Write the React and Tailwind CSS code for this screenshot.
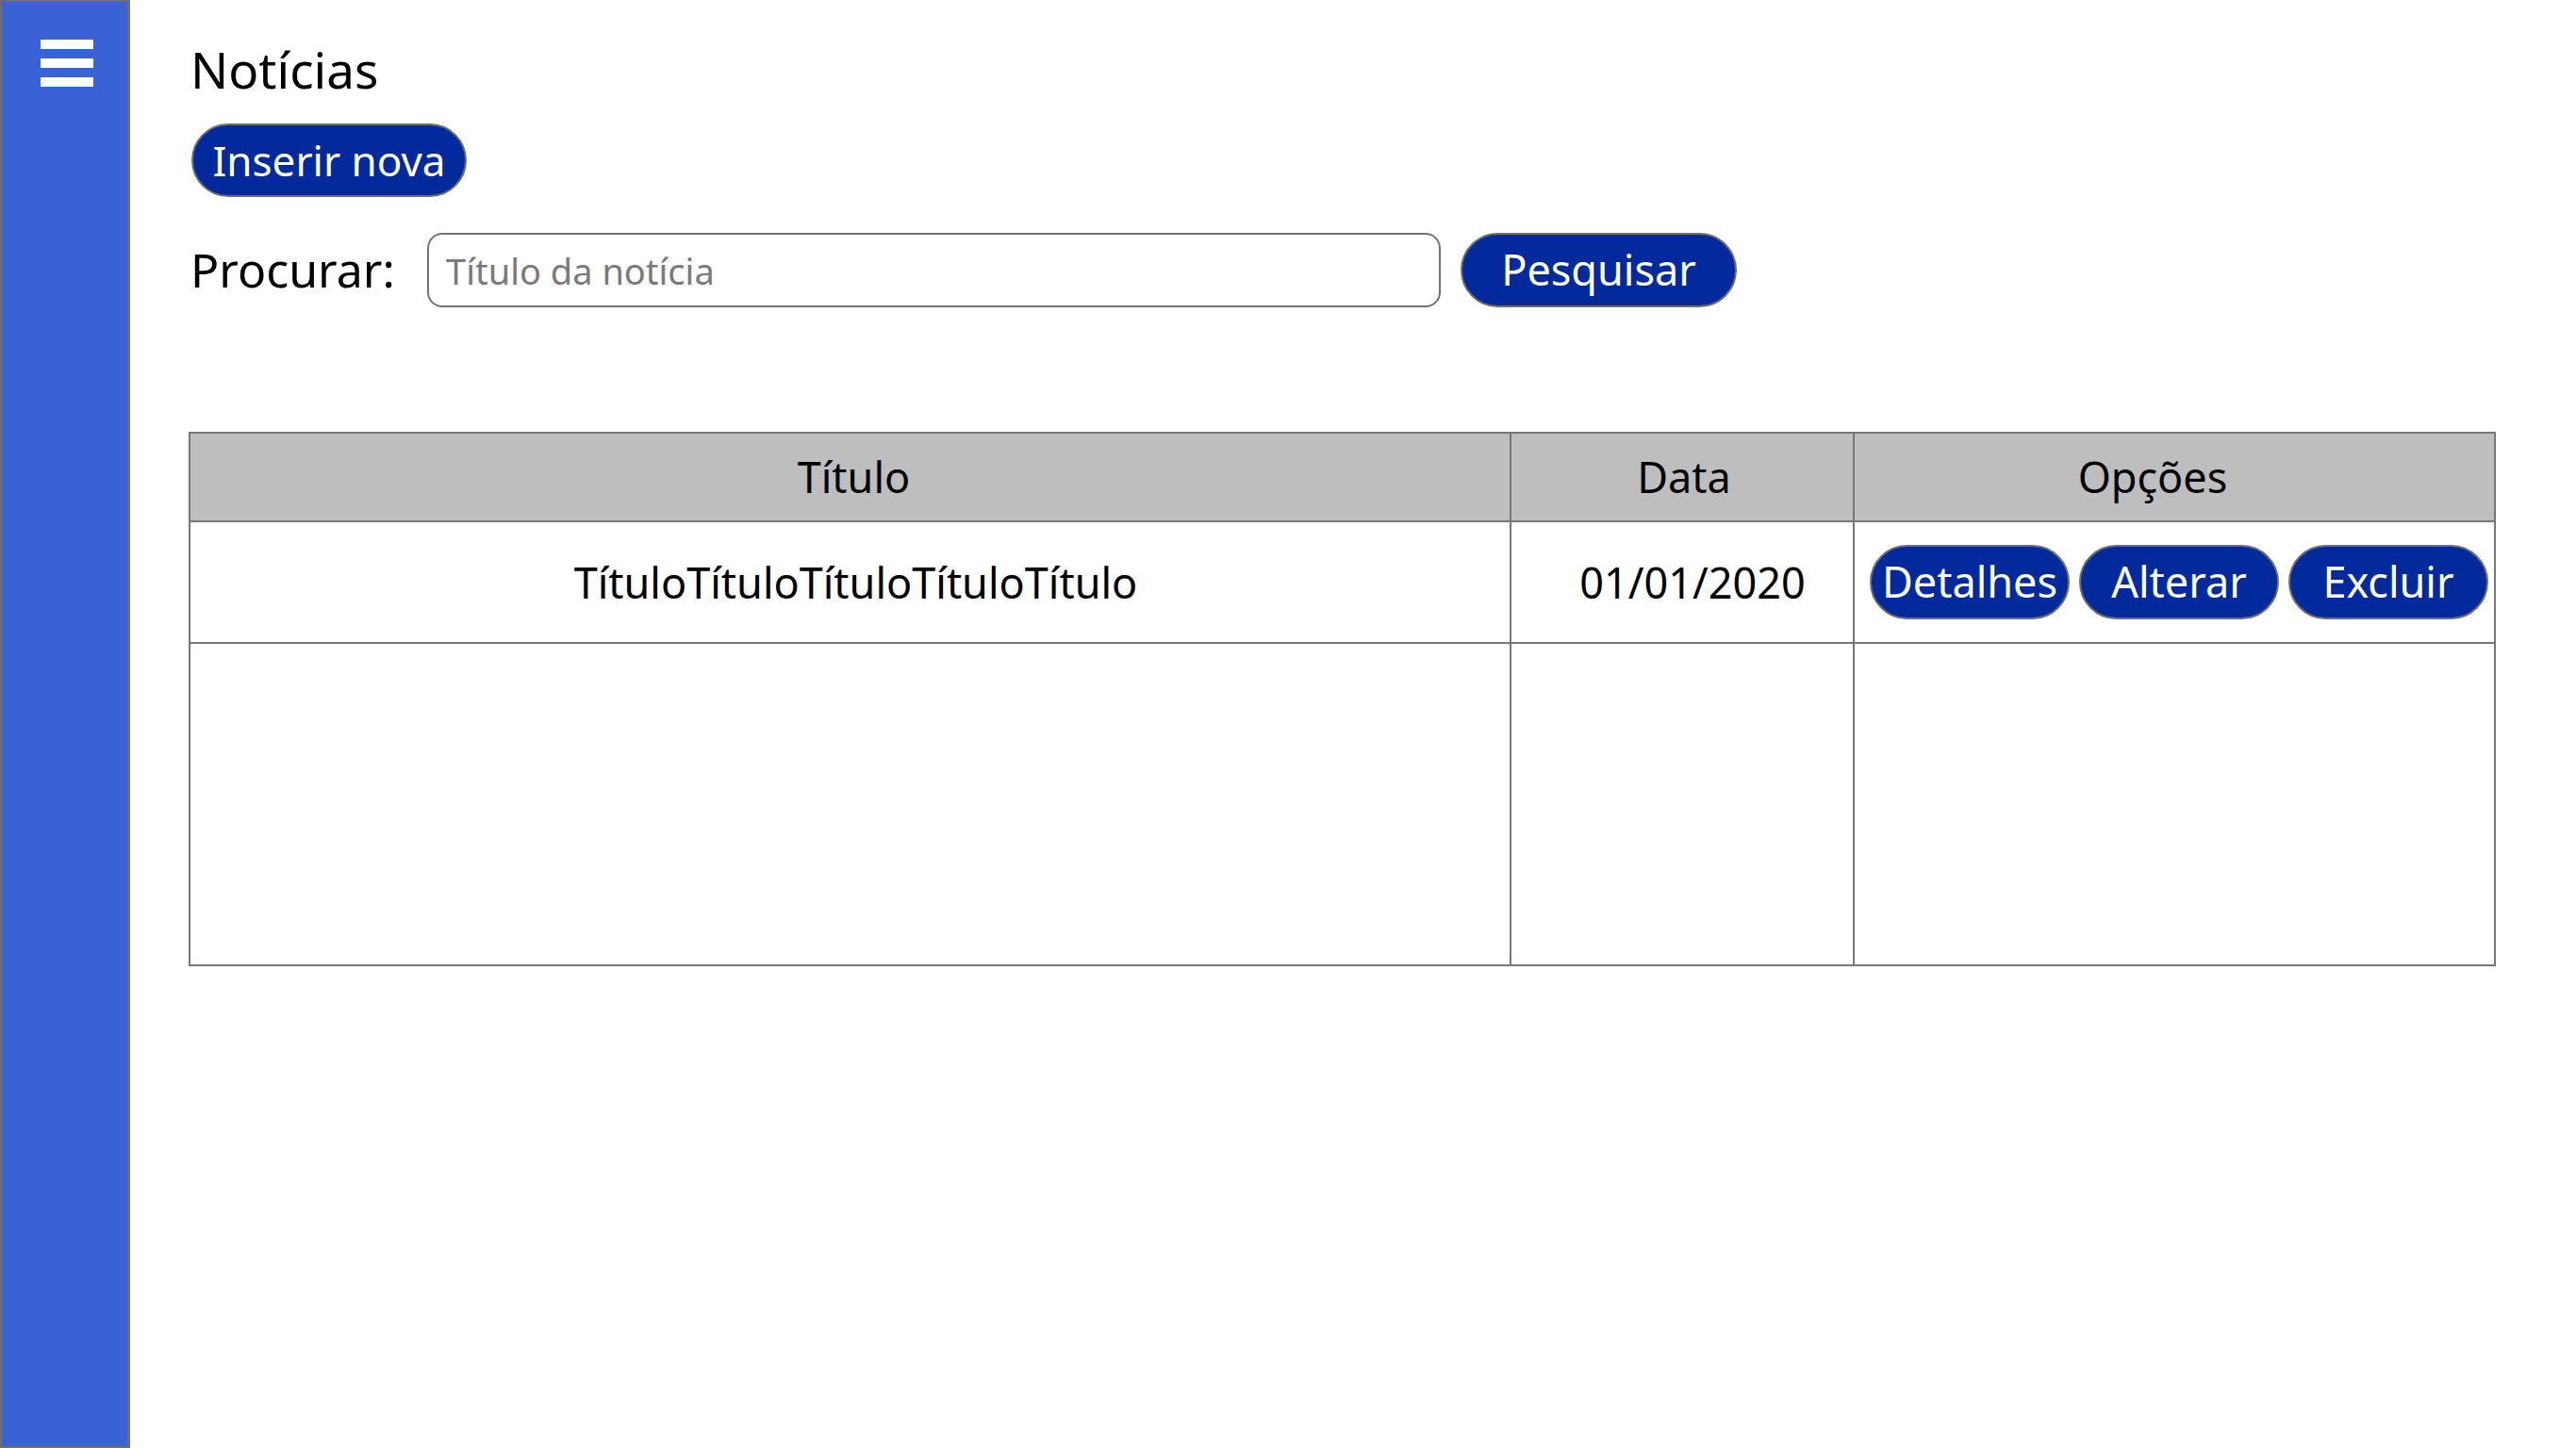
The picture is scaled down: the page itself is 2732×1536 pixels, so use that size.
import React from 'react';

const Sidebar = () => (
    <aside className="w-[138px] h-[1536px] shrink-0 bg-[#3862d6] border-2 border-r-[3px] border-[#6e6e6e] flex flex-col items-center pt-[40px]">
        {/* menu icon */}
        <div className="flex flex-col gap-[10px] w-[56px] ml-[4px]">
            <span className="block h-[10px] bg-white"></span>
            <span className="block h-[10px] bg-white"></span>
            <span className="block h-[10px] bg-white"></span>
        </div>
    </aside>
);

const PillButton = ({ children, className = "" }) => (
    <button className={`shrink-0 bg-[#032a9c] text-white border-2 border-[#6e6e6e] rounded-full leading-none flex items-center justify-center ${className}`}>
        {children}
    </button>
);

const App = () => {
    const rows = [{ titulo: "TítuloTítuloTítuloTítuloTítulo", data: "01/01/2020" }];

    return (
        <div className="flex w-[2732px] h-[1536px] bg-white font-['Noto_Sans','Open_Sans',sans-serif] text-black overflow-hidden">
            <Sidebar />

            <main className="flex-1 pl-[62px] pt-[39px]">
                <h1 className="text-[53px] leading-[70px] ml-[2px]">Notícias</h1>

                <PillButton className="mt-[22px] ml-[3px] w-[292px] h-[78px] text-[44px] pb-[1px]">Inserir nova</PillButton>

                {/* search */}
                <div className="flex items-center mt-[38px] h-[79px]">
                    <label className="text-[50px] ml-[2px] w-[220px]">Procurar:</label>
                    <input
                        type="text"
                        placeholder="Título da notícia"
                        className="ml-[31px] w-[1075px] h-[79px] border-2 border-[#737373] rounded-[16px] px-[18px] text-[38px] placeholder:text-[#7a7a7a] outline-none"
                    />
                    <PillButton className="ml-[21px] w-[293px] h-[79px] text-[45px] pb-[2px]">Pesquisar</PillButton>
                </div>

                {/* news table */}
                <table className="mt-[132px] w-[2445px] border-collapse border-2 border-[#777] text-[45px] table-fixed">
                    <colgroup>
                        <col className="w-[1401px]" />
                        <col className="w-[364px]" />
                        <col className="w-[680px]" />
                    </colgroup>
                    <thead>
                        <tr className="h-[94px] bg-[#bebebe]">
                            <th className="font-normal border-2 border-[#777] pl-[8px]">Título</th>
                            <th className="font-normal border-2 border-[#777] pl-[4px]">Data</th>
                            <th className="font-normal border-2 border-[#777] pr-[46px]">Opções</th>
                        </tr>
                    </thead>
                    <tbody>
                        {rows.map((r, i) => (
                            <tr key={i} className="h-[129px]">
                                <td className="text-center border-2 border-[#777] pl-[12px]">{r.titulo}</td>
                                <td className="text-center border-2 border-[#777] pl-[22px]">{r.data}</td>
                                <td className="border-2 border-[#777] pl-[16px] pr-[2px]">
                                    <div className="flex gap-[10px]">
                                        <PillButton className="w-[212px] h-[79px] text-[45px] pb-[2px]">Detalhes</PillButton>
                                        <PillButton className="w-[212px] h-[79px] text-[45px] pb-[2px]">Alterar</PillButton>
                                        <PillButton className="w-[212px] h-[79px] text-[45px] pb-[2px]">Excluir</PillButton>
                                    </div>
                                </td>
                            </tr>
                        ))}
                        <tr className="h-[342px]">
                            <td className="border-2 border-[#777]"></td>
                            <td className="border-2 border-[#777]"></td>
                            <td className="border-2 border-[#777]"></td>
                        </tr>
                    </tbody>
                </table>
            </main>
        </div>
    );
};

export default App;
